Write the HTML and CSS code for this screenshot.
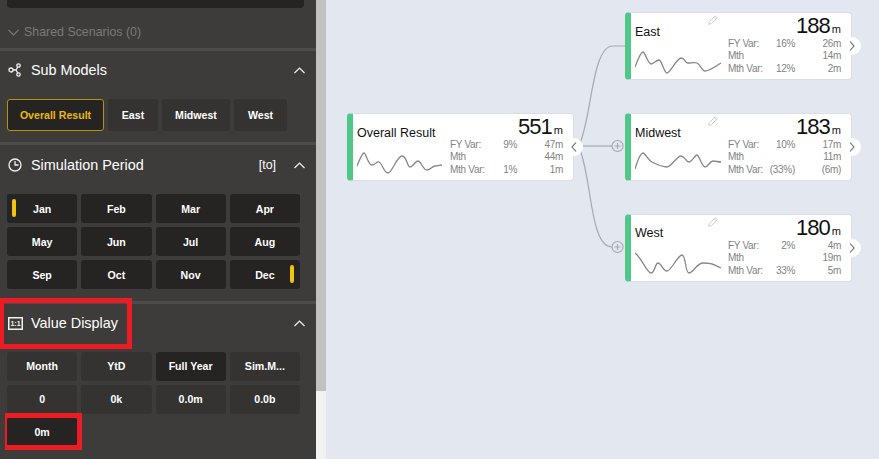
FILE: index.html
```html
<!DOCTYPE html>
<html lang="en">
<head>
    <meta charset="UTF-8">
    <title>Simulation Model</title>
    <link rel="stylesheet" href="styles.css">
</head>
<body>
    <aside class="sidebar">
        <div class="top-box"></div>
        <div class="shared-row">
            <svg class="chev-down" width="11" height="7" viewBox="0 0 11 7"><path d="M0.5 1 L5.5 6 L10.5 1"/></svg>
            <span>Shared Scenarios (0)</span>
        </div>

        <section class="panel panel-models">
            <div class="panel-head">
                <svg class="panel-icon" width="14" height="14" viewBox="0 0 14 14">
                    <circle cx="3" cy="7" r="2"/>
                    <circle cx="10.5" cy="2.5" r="1.7"/>
                    <circle cx="10.5" cy="11.5" r="1.7"/>
                    <path d="M5 7 H8 M8 7 L9.8 4 M8 7 L9.8 10"/>
                </svg>
                <h2>Sub Models</h2>
                <svg class="chev-up" width="11" height="7" viewBox="0 0 11 7"><path d="M0.5 6 L5.5 1 L10.5 6"/></svg>
            </div>
            <div class="model-btns">
                <button class="btn btn-active btn-overall">Overall Result</button>
                <button class="btn btn-east">East</button>
                <button class="btn btn-midwest">Midwest</button>
                <button class="btn btn-west">West</button>
            </div>
        </section>

        <section class="panel panel-period">
            <div class="panel-head">
                <svg class="panel-icon" width="14" height="14" viewBox="0 0 14 14">
                    <circle cx="7" cy="7" r="6"/>
                    <path d="M7 3 V7 H10.5"/>
                </svg>
                <h2>Simulation Period</h2>
                <span class="head-tag">[to]</span>
                <svg class="chev-up" width="11" height="7" viewBox="0 0 11 7"><path d="M0.5 6 L5.5 1 L10.5 6"/></svg>
            </div>
            <div class="btn-grid">
                <button class="btn btn-dark"><span class="mark mark-left"></span>Jan</button>
                <button class="btn btn-dark">Feb</button>
                <button class="btn btn-dark">Mar</button>
                <button class="btn btn-dark">Apr</button>
                <button class="btn btn-dark">May</button>
                <button class="btn btn-dark">Jun</button>
                <button class="btn btn-dark">Jul</button>
                <button class="btn btn-dark">Aug</button>
                <button class="btn btn-dark">Sep</button>
                <button class="btn btn-dark">Oct</button>
                <button class="btn btn-dark">Nov</button>
                <button class="btn btn-dark">Dec<span class="mark mark-right"></span></button>
            </div>
        </section>

        <section class="panel panel-value">
            <div class="panel-head">
                <svg class="panel-icon icon-ratio" width="15" height="13" viewBox="0 0 15 13">
                    <rect x="0.75" y="0.75" width="13.5" height="11.5"/>
                    <text x="7.5" y="9.2" text-anchor="middle">1:1</text>
                </svg>
                <h2>Value Display</h2>
                <svg class="chev-up" width="11" height="7" viewBox="0 0 11 7"><path d="M0.5 6 L5.5 1 L10.5 6"/></svg>
            </div>
            <div class="btn-grid">
                <button class="btn">Month</button>
                <button class="btn">YtD</button>
                <button class="btn btn-dark">Full Year</button>
                <button class="btn">Sim.M...</button>
                <button class="btn">0</button>
                <button class="btn">0k</button>
                <button class="btn">0.0m</button>
                <button class="btn">0.0b</button>
                <button class="btn btn-dark">0m</button>
            </div>
            <div class="callout callout-head"></div>
            <div class="callout callout-btn"></div>
        </section>
    </aside>

    <div class="scrollbar"><div class="scroll-thumb"></div></div>

    <main class="canvas">
        <svg class="links" width="553" height="459" viewBox="326 0 553 459">
            <path d="M580 143 C592 115 592 46 613 46 L625 46"/>
            <path d="M582 146 H612"/>
            <path d="M580 150 C592 180 590 247 612 247"/>
            <circle cx="617.5" cy="146" r="5.5"/>
            <path d="M614.5 146 H620.5 M617.5 143 V149"/>
            <circle cx="617.5" cy="247" r="5.5"/>
            <path d="M614.5 247 H620.5 M617.5 244 V250"/>
        </svg>

        <article class="card card-overall">
            <div class="card-left">
                <h3>Overall Result</h3>
                <svg class="spark" width="88" height="30" viewBox="0 0 88 30"><path d="M0 17 C3 10 5 4 7 4 S11 16 15 16 S19 12 22 13 S27 24 31 24 S40 7 45 7 S50 18 53 18 S58 12 61 12 S66 21 70 21 S75 17 78 17 S83 16 85 16"/></svg>
            </div>
            <div class="card-right">
                <div class="total">551<small>m</small></div>
                <div class="stats">
                    <span>FY Var:</span><span>9%</span><span>47m</span>
                    <span>Mth</span><span></span><span>44m</span>
                    <span>Mth Var:</span><span>1%</span><span>1m</span>
                </div>
            </div>
            <div class="toggle"><svg width="6" height="10" viewBox="0 0 6 10"><path d="M5 0.5 L1 5 L5 9.5"/></svg></div>
        </article>

        <article class="card card-east">
            <svg class="pencil" width="10" height="10" viewBox="0 0 10 10"><path d="M0.7 9.3 L1.3 6.7 L7.3 0.7 L9.3 2.7 L3.3 8.7 Z M6.2 1.8 L8.2 3.8"/></svg>
            <div class="card-left">
                <h3>East</h3>
                <svg class="spark" width="88" height="30" viewBox="0 0 88 30"><path d="M0 19 C3 11 6 4 8 4 S13 16 16 16 S21 12 24 12 S29 25 32 25 S42 10 46 10 S50 15 53 15 S59 14 62 15 S67 23 70 23 S80 19 86 15"/></svg>
            </div>
            <div class="card-right">
                <div class="total">188<small>m</small></div>
                <div class="stats">
                    <span>FY Var:</span><span>16%</span><span>26m</span>
                    <span>Mth</span><span></span><span>14m</span>
                    <span>Mth Var:</span><span>12%</span><span>2m</span>
                </div>
            </div>
            <div class="toggle"><svg width="6" height="10" viewBox="0 0 6 10"><path d="M1 0.5 L5 5 L1 9.5"/></svg></div>
        </article>

        <article class="card card-midwest">
            <svg class="pencil" width="10" height="10" viewBox="0 0 10 10"><path d="M0.7 9.3 L1.3 6.7 L7.3 0.7 L9.3 2.7 L3.3 8.7 Z M6.2 1.8 L8.2 3.8"/></svg>
            <div class="card-left">
                <h3>Midwest</h3>
                <svg class="spark" width="88" height="30" viewBox="0 0 88 30"><path d="M0 20 C3 10 6 4 8 4 S13 11 17 13 S28 18 32 18 S42 7 46 7 S51 13 54 13 S60 6 62 6 S67 18 70 18 S75 12 78 12 S83 13 86 13"/></svg>
            </div>
            <div class="card-right">
                <div class="total">183<small>m</small></div>
                <div class="stats">
                    <span>FY Var:</span><span>10%</span><span>17m</span>
                    <span>Mth</span><span></span><span>11m</span>
                    <span>Mth Var:</span><span>(33%)</span><span>(6m)</span>
                </div>
            </div>
            <div class="toggle"><svg width="6" height="10" viewBox="0 0 6 10"><path d="M1 0.5 L5 5 L1 9.5"/></svg></div>
        </article>

        <article class="card card-west">
            <svg class="pencil" width="10" height="10" viewBox="0 0 10 10"><path d="M0.7 9.3 L1.3 6.7 L7.3 0.7 L9.3 2.7 L3.3 8.7 Z M6.2 1.8 L8.2 3.8"/></svg>
            <div class="card-left">
                <h3>West</h3>
                <svg class="spark" width="88" height="30" viewBox="0 0 88 30"><path d="M0 3 C6 7 12 23 16 23 S20 13 23 13 S28 21 32 21 S43 5 47 5 S50 23 54 23 S62 13 68 13 S73 13 77 14 S83 17 86 18"/></svg>
            </div>
            <div class="card-right">
                <div class="total">180<small>m</small></div>
                <div class="stats">
                    <span>FY Var:</span><span>2%</span><span>4m</span>
                    <span>Mth</span><span></span><span>19m</span>
                    <span>Mth Var:</span><span>33%</span><span>5m</span>
                </div>
            </div>
            <div class="toggle"><svg width="6" height="10" viewBox="0 0 6 10"><path d="M1 0.5 L5 5 L1 9.5"/></svg></div>
        </article>
    </main>
</body>
</html>
```

FILE: styles.css
```css
html, body {
    height: 100%;
}
body {
    margin: 0;
    display: flex;
    height: 459px;
    overflow: hidden;
    font-family: "Liberation Sans", Arial, sans-serif;
    background: #e2e7f0;
}

/* left panel */
.sidebar {
    width: 316px;
    flex: none;
    height: 459px;
    overflow: hidden;
    background: #3d3c3a;
    color: #fff;
}
.top-box {
    height: 8px;
    margin: 0 12px 0 7px;
    background: #252423;
    border-radius: 0 0 4px 4px;
}
.shared-row {
    box-sizing: border-box;
    height: 40px;
    padding: 8px 0 0 8px;
    display: flex;
    align-items: center;
    gap: 5px;
    font-size: 12.4px;
    color: #7b7a78;
}
.chev-down {
    fill: none;
    stroke: #787775;
    stroke-width: 1.1;
}
.panel {
    position: relative;
    border-top: 3px solid #4d4c4a;
}
.panel-head {
    display: flex;
    align-items: center;
    padding: 0 11px 0 8px;
}
.panel-models .panel-head {
    height: 38px;
    padding-bottom: 1px;
}
.panel-period .panel-head {
    height: 40px;
}
.panel-value .panel-head {
    height: 38px;
}
.panel-head h2 {
    margin: 0 0 0 9px;
    font-size: 14.4px;
    font-weight: normal;
    flex: 1;
}
.panel-icon {
    flex: none;
    fill: none;
    stroke: #f2f2f2;
    stroke-width: 1.3;
}
.icon-ratio {
    margin-right: -1px;
    stroke-width: 1.5;
}
.panel-icon text {
    font-family: "Liberation Sans", Arial, sans-serif;
    font-size: 7px;
    font-weight: bold;
    fill: #f2f2f2;
    stroke: none;
}
.head-tag {
    font-size: 12.4px;
    margin-right: 18px;
}
.chev-up {
    flex: none;
    fill: none;
    stroke: #f0f0f0;
    stroke-width: 1.2;
}
.btn {
    position: relative;
    height: 29px;
    padding: 0;
    border: none;
    border-radius: 3px;
    background: #343331;
    color: #fff;
    font-family: inherit;
    font-size: 10.6px;
    font-weight: bold;
    overflow: hidden;
}
.btn-dark {
    background: #252423;
}
.model-btns {
    display: flex;
    gap: 4px;
    padding: 9px 0 11px 7px;
}
.model-btns .btn {
    height: 32px;
}
.btn-overall {
    width: 97px;
}
.btn-east {
    width: 50px;
}
.btn-midwest {
    width: 68px;
}
.btn-west {
    width: 53px;
}
.btn-active {
    background: #252423;
    border: 1px solid #b3930f;
    color: #e8b90e;
}
.btn-grid {
    display: grid;
    grid-template-columns: repeat(4, 1fr);
    gap: 4px;
    padding: 9px 16px 12px 7px;
}
.panel-value .btn-grid {
    padding-top: 10px;
}
.panel-value .btn {
    padding-bottom: 2px;
}
.mark {
    position: absolute;
    top: 5px;
    width: 4px;
    height: 18px;
    border-radius: 2px;
    background: #f2c40f;
}
.mark-left {
    left: 5px;
}
.mark-right {
    right: 6px;
}

/* red annotation boxes from the screenshot */
.callout {
    position: absolute;
    box-sizing: border-box;
    pointer-events: none;
}
.callout-head {
    left: 0;
    top: -6px;
    width: 132px;
    height: 51px;
    border: 5px solid #ed1c24;
    border-left-width: 4px;
}
.callout-btn {
    left: 5px;
    top: 109px;
    width: 77px;
    height: 37px;
    border: 5px solid #ed1c24;
    border-width: 5px 5px 5px 2px;
}

.scrollbar {
    width: 10px;
    flex: none;
    height: 459px;
    background: #f1f1f1;
}
.scroll-thumb {
    height: 391px;
    background: #c1c1c1;
}

/* diagram area */
.canvas {
    position: relative;
    flex: 1;
    height: 459px;
}
.links {
    position: absolute;
    left: 0;
    top: 0;
    fill: none;
    stroke: #a6a9b0;
    stroke-width: 1.2;
}
.card {
    position: absolute;
    box-sizing: border-box;
    width: 227px;
    height: 68px;
    display: flex;
    background: #fff;
    border: 1px solid #dadee6;
    border-left: 6px solid #4fc786;
    border-radius: 4px;
}
.card-overall {
    left: 21px;
    top: 113px;
}
.card-east {
    left: 299px;
    top: 12px;
}
.card-midwest {
    left: 299px;
    top: 113px;
}
.card-west {
    left: 299px;
    top: 214px;
}
.card-left {
    width: 97px;
    padding-left: 4px;
    box-sizing: border-box;
}
.card-left h3 {
    margin: 0;
    height: 35px;
    line-height: 38px;
    font-size: 12.5px;
    font-weight: normal;
    color: #111;
}
.card-west .card-left h3 {
    line-height: 36px;
}
.spark {
    display: block;
    fill: none;
    stroke: #868686;
    stroke-width: 1.3;
}
.card-right {
    width: 113px;
}
.total {
    height: 25px;
    line-height: 26px;
    text-align: right;
    font-size: 22px;
    letter-spacing: -1px;
    color: #111;
}
.total small {
    font-size: 11px;
    letter-spacing: 0;
    margin-left: 2px;
}
.stats {
    display: grid;
    grid-template-columns: 40px 27px 46px;
    grid-auto-rows: 12.3px;
    font-size: 10px;
    letter-spacing: -0.3px;
    line-height: 12.3px;
    color: #828282;
    white-space: nowrap;
}
.stats span:nth-child(3n+2),
.stats span:nth-child(3n) {
    text-align: right;
}
.toggle {
    position: absolute;
    right: -10px;
    top: 24px;
    width: 18px;
    height: 18px;
    border-radius: 50%;
    background: #fff;
    display: flex;
    align-items: center;
    justify-content: center;
}
.toggle svg {
    fill: none;
    stroke: #666;
    stroke-width: 1.1;
}
.pencil {
    position: absolute;
    left: 77px;
    top: 2px;
    fill: none;
    stroke: #cfcfcf;
    stroke-width: 1;
}
```
